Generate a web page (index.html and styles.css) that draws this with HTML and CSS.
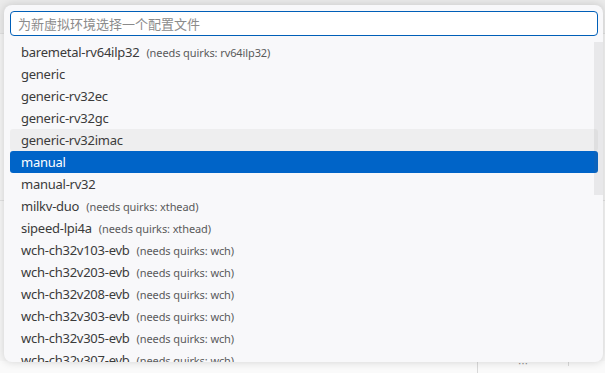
FILE: index.html
```html
<!DOCTYPE html>
<html lang="zh-CN">
<head>
  <meta charset="UTF-8">
  <meta name="viewport" content="width=device-width, initial-scale=1.0">
  <title>选择配置文件</title>
  <link rel="stylesheet" href="styles.css">
</head>
<body>
  <div class="workbench">
    <div class="top-bar"></div>
    <div class="editor-area"></div>
    <div class="panel">
      <div class="panel-strip">
        <span class="panel-sep"></span>
        <span class="panel-icons">⋯</span>
        <span class="panel-sep small"></span>
      </div>
    </div>
  </div>

  <div class="quick-pick">
    <div class="quick-input">
      <input type="text" placeholder="为新虚拟环境选择一个配置文件">
    </div>
    <div class="quick-list">
      <ul id="profile-list"></ul>
      <div class="scroll-thumb"></div>
    </div>
  </div>

  <script>
const profiles = [
  { name: 'baremetal-rv64ilp32', quirks: 'rv64ilp32' },
  { name: 'generic' },
  { name: 'generic-rv32ec' },
  { name: 'generic-rv32gc' },
  { name: 'generic-rv32imac', hover: true },
  { name: 'manual', selected: true },
  { name: 'manual-rv32' },
  { name: 'milkv-duo', quirks: 'xthead' },
  { name: 'sipeed-lpi4a', quirks: 'xthead' },
  { name: 'wch-ch32v103-evb', quirks: 'wch' },
  { name: 'wch-ch32v203-evb', quirks: 'wch' },
  { name: 'wch-ch32v208-evb', quirks: 'wch' },
  { name: 'wch-ch32v303-evb', quirks: 'wch' },
  { name: 'wch-ch32v305-evb', quirks: 'wch' },
  { name: 'wch-ch32v307-evb', quirks: 'wch' },
];

const list = document.getElementById('profile-list');

profiles.forEach((p) => {
  const li = document.createElement('li');
  li.className = 'pick-row';
  if (p.hover) li.classList.add('hover');
  if (p.selected) li.classList.add('selected');
  li.innerHTML = `<span class="label">${p.name}</span>` +
    (p.quirks ? `<span class="desc">(needs quirks: ${p.quirks})</span>` : '');
  list.appendChild(li);
});
  </script>
</body>
</html>
```

FILE: styles.css
```css
body {
  margin: 0;
  padding: 0;
  font-family: "Noto Sans", "Noto Sans CJK SC", sans-serif;
  background-color: #f3f3f3;
  overflow: hidden;
}

.workbench {
  height: 373px;
  display: flex;
  flex-direction: column;
}

.top-bar {
  height: 33px;
  background-color: #ebebeb;
  border-bottom: 1px solid #e0e0e0;
}

.editor-area {
  height: 166px;
  background-color: #f4f4f4;
  border-bottom: 1px solid #e2e2e2;
}

.panel {
  flex: 1;
  display: flex;
  flex-direction: column;
  justify-content: flex-end;
  background-color: #f6f6f6;
}

.panel-strip {
  height: 12px;
  display: flex;
  align-items: flex-start;
  padding-left: 477px;
  gap: 40px;
  background-color: #fafafa;
}

.panel-sep {
  width: 1px;
  height: 12px;
  background-color: #d8d8d8;
}

.panel-sep.small {
  height: 5px;
}

.panel-icons {
  font-size: 10px;
  color: #888;
  line-height: 6px;
}

.quick-pick {
  position: absolute;
  top: 5px;
  left: 4px;
  width: 599px;
  height: 357px;
  background-color: #f8f8fa;
  border-radius: 8px;
  box-shadow: 0 0 8px rgba(0, 0, 0, 0.16);
  overflow: hidden;
  display: flex;
  flex-direction: column;
}

.quick-input {
  padding: 6px 5px 5px 6px;
}

.quick-input input {
  box-sizing: border-box;
  width: 100%;
  height: 25px;
  border: 1px solid #005fb8;
  border-radius: 4px;
  background: white;
  padding: 0 7px;
  font-family: "Noto Sans", "Noto Sans CJK SC", sans-serif;
  font-size: 13px;
  color: #3b3b3b;
  outline: none;
}

.quick-input input::placeholder {
  color: #8b8b8b;
}

.quick-list {
  position: relative;
  flex: 1;
  overflow: hidden;
}

.quick-list ul {
  list-style: none;
  margin: 0;
  padding: 0 5px 0 6px;
}

.pick-row {
  height: 22px;
  display: flex;
  align-items: center;
  padding-left: 11px;
  border-radius: 3px;
  color: #3b3b3b;
  font-size: 13px;
  letter-spacing: -0.25px;
  white-space: nowrap;
}

.pick-row .desc {
  margin-left: 7px;
  font-size: 11px;
  letter-spacing: -0.1px;
  color: #5a5a5a;
}

.pick-row.hover {
  background-color: #eeeeef;
}

.pick-row.selected {
  background-color: #0064c8;
  color: #ffffff;
}

.scroll-thumb {
  position: absolute;
  top: 1px;
  right: 0;
  width: 9px;
  height: 153px;
  background-color: rgba(100, 100, 100, 0.1);
}
```
